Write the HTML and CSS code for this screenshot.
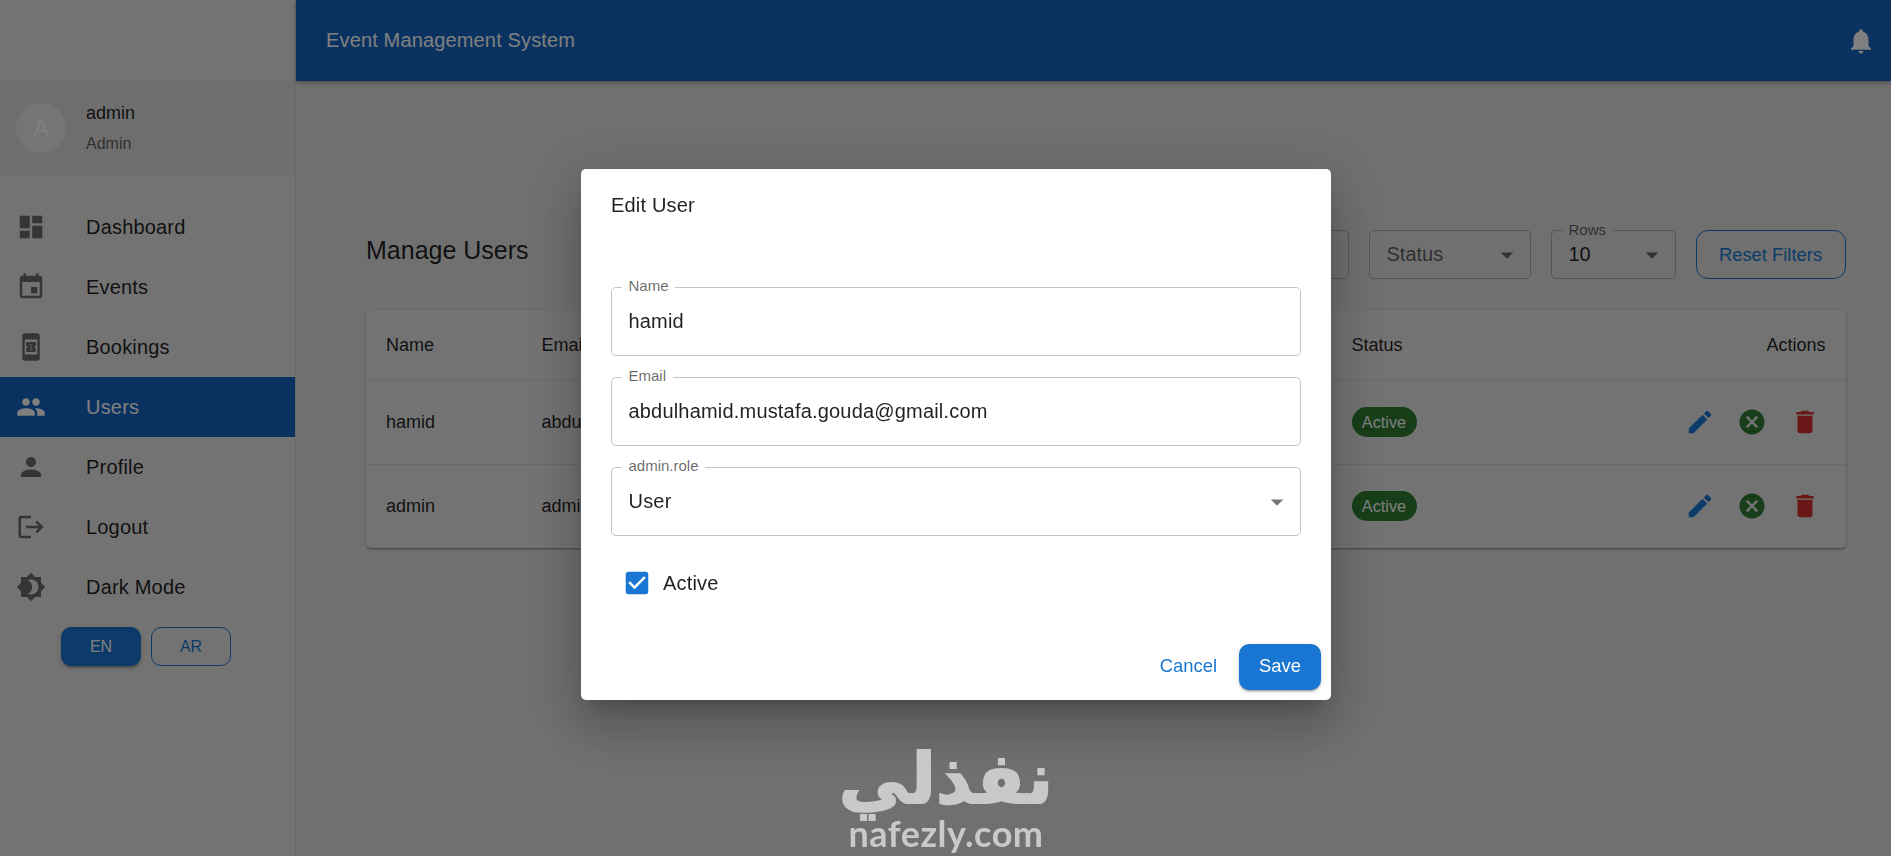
FILE: index.html
```html
<!DOCTYPE html>
<html lang="en">

	<head>
		<meta charset="UTF-8">
		<title>Manage Users</title>
		<link rel="stylesheet" href="styles.css">
	</head>

	<body>
		<div class="layout">
			<!--sidebar-->
			<div class="sidebar">
				<div class="profile">
					<div class="avatar">A</div>
					<div>
						<div class="profile_name">admin</div>
						<div class="profile_role">Admin</div>
					</div>
				</div>
				<ul class="nav">
					<li class="nav_item"><svg class="icon nav_icon" viewBox="0 0 24 24"><path d="M3 13h8V3H3v10zm0 8h8v-6H3v6zm10 0h8V11h-8v10zm0-18v6h8V3h-8z"/></svg>Dashboard</li>
					<li class="nav_item"><svg class="icon nav_icon" viewBox="0 0 24 24"><path d="M17 12h-5v5h5v-5zM16 1v2H8V1H6v2H5c-1.11 0-1.99.9-1.99 2L3 19c0 1.1.89 2 2 2h14c1.1 0 2-.9 2-2V5c0-1.1-.9-2-2-2h-1V1h-2zm3 18H5V8h14v11z"/></svg>Events</li>
					<li class="nav_item"><svg class="icon nav_icon" viewBox="0 0 24 24"><path d="M17 1H7c-1.1 0-2 .9-2 2v18c0 1.1.9 2 2 2h10c1.1 0 2-.9 2-2V3c0-1.1-.9-2-2-2zM7 18V6h10v12H7zm9-7V9.14C16 8.51 15.55 8 15 8H9c-.55 0-1 .51-1 1.14v1.96c.55 0 1 .45 1 1s-.45 1-1 1v1.76C8 15.49 8.45 16 9 16h6c.55 0 1-.51 1-1.14V13c-.55 0-1-.45-1-1s.45-1 1-1zm-3.5 3.5h-1v-1h1v1zm0-2h-1v-1h1v1zm0-2h-1v-1h1v1z"/></svg>Bookings</li>
					<li class="nav_item nav_active"><svg class="icon nav_icon" viewBox="0 0 24 24"><path d="M16 11c1.66 0 2.99-1.34 2.99-3S17.66 5 16 5c-1.66 0-3 1.34-3 3s1.34 3 3 3zm-8 0c1.66 0 2.99-1.34 2.99-3S9.66 5 8 5C6.34 5 5 6.34 5 8s1.34 3 3 3zm0 2c-2.33 0-7 1.17-7 3.5V19h14v-2.5c0-2.33-4.67-3.5-7-3.5zm8 0c-.29 0-.62.02-.97.05 1.16.84 1.97 1.97 1.97 3.45V19h6v-2.5c0-2.33-4.67-3.5-7-3.5z"/></svg>Users</li>
					<li class="nav_item"><svg class="icon nav_icon" viewBox="0 0 24 24"><path d="M12 12c2.21 0 4-1.79 4-4s-1.79-4-4-4-4 1.79-4 4 1.79 4 4 4zm0 2c-2.67 0-8 1.34-8 4v2h16v-2c0-2.66-5.33-4-8-4z"/></svg>Profile</li>
					<li class="nav_item"><svg class="icon nav_icon" viewBox="0 0 24 24"><path d="M17 7l-1.41 1.41L18.17 11H8v2h10.17l-2.58 2.58L17 17l5-5zM4 5h8V3H4c-1.1 0-2 .9-2 2v14c0 1.1.9 2 2 2h8v-2H4V5z"/></svg>Logout</li>
					<li class="nav_item"><svg class="icon nav_icon" viewBox="0 0 24 24"><path d="M20 8.69V4h-4.69L12 .69 8.69 4H4v4.69L.69 12 4 15.31V20h4.69L12 23.31 15.31 20H20v-4.69L23.31 12 20 8.69zM12 18c-.89 0-1.74-.2-2.5-.55C11.56 16.5 13 14.42 13 12s-1.44-4.5-3.5-5.45C10.26 6.2 11.11 6 12 6c3.31 0 6 2.69 6 6s-2.69 6-6 6z"/></svg>Dark Mode</li>
				</ul>
				<div class="lang">
					<button class="lang_button lang_active">EN</button>
					<button class="lang_button">AR</button>
				</div>
			</div>

			<div class="main">
				<div class="appbar">
					<span>Event Management System</span>
					<svg class="icon" viewBox="0 0 24 24"><path d="M12 22c1.1 0 2-.9 2-2h-4c0 1.1.89 2 2 2zm6-6v-5c0-3.07-1.64-5.64-4.5-6.32V4c0-.83-.67-1.5-1.5-1.5s-1.5.67-1.5 1.5v.68C7.63 5.36 6 7.92 6 11v5l-2 2v1h16v-1l-2-2z"/></svg>
				</div>

				<div class="content">
					<div class="toolbar">
						<div class="page_title">Manage Users</div>
						<div class="filters">
							<div class="filter filter_wide"></div>
							<div class="filter filter_status">Status<svg class="icon arrow" viewBox="0 0 24 24"><path d="M7 10l5 5 5-5z"/></svg></div>
							<div class="filter filter_rows"><span class="filter_label">Rows</span><span class="filter_value">10</span><svg class="icon arrow" viewBox="0 0 24 24"><path d="M7 10l5 5 5-5z"/></svg></div>
							<button class="reset_button">Reset Filters</button>
						</div>
					</div>

					<table class="users">
						<colgroup>
							<col class="col_name">
							<col class="col_email">
							<col class="col_status">
							<col class="col_actions">
						</colgroup>
						<tr class="head_row">
							<th>Name</th>
							<th>Email</th>
							<th>Status</th>
							<th class="actions_cell">Actions</th>
						</tr>
						<tr>
							<td>hamid</td>
							<td>abdulh</td>
							<td><span class="chip">Active</span></td>
							<td>
								<div class="actions_box">
									<svg class="icon act_edit" viewBox="0 0 24 24"><path d="M3 17.25V21h3.75L17.81 9.94l-3.75-3.75L3 17.25zM20.71 7.04c.39-.39.39-1.02 0-1.41l-2.34-2.34a.9959.9959 0 0 0-1.41 0l-1.83 1.83 3.75 3.75 1.83-1.83z"/></svg>
									<svg class="icon act_toggle" viewBox="0 0 24 24"><path d="M12 2C6.47 2 2 6.47 2 12s4.47 10 10 10 10-4.47 10-10S17.53 2 12 2zm5 13.59L15.59 17 12 13.41 8.41 17 7 15.59 10.59 12 7 8.41 8.41 7 12 10.59 15.59 7 17 8.41 13.41 12 17 15.59z"/></svg>
									<svg class="icon act_delete" viewBox="0 0 24 24"><path d="M6 19c0 1.1.9 2 2 2h8c1.1 0 2-.9 2-2V7H6v12zM19 4h-3.5l-1-1h-5l-1 1H5v2h14V4z"/></svg>
								</div>
							</td>
						</tr>
						<tr>
							<td>admin</td>
							<td>admin</td>
							<td><span class="chip">Active</span></td>
							<td>
								<div class="actions_box">
									<svg class="icon act_edit" viewBox="0 0 24 24"><path d="M3 17.25V21h3.75L17.81 9.94l-3.75-3.75L3 17.25zM20.71 7.04c.39-.39.39-1.02 0-1.41l-2.34-2.34a.9959.9959 0 0 0-1.41 0l-1.83 1.83 3.75 3.75 1.83-1.83z"/></svg>
									<svg class="icon act_toggle" viewBox="0 0 24 24"><path d="M12 2C6.47 2 2 6.47 2 12s4.47 10 10 10 10-4.47 10-10S17.53 2 12 2zm5 13.59L15.59 17 12 13.41 8.41 17 7 15.59 10.59 12 7 8.41 8.41 7 12 10.59 15.59 7 17 8.41 13.41 12 17 15.59z"/></svg>
									<svg class="icon act_delete" viewBox="0 0 24 24"><path d="M6 19c0 1.1.9 2 2 2h8c1.1 0 2-.9 2-2V7H6v12zM19 4h-3.5l-1-1h-5l-1 1H5v2h14V4z"/></svg>
								</div>
							</td>
						</tr>
					</table>
				</div>
			</div>
		</div>

		<!--edit user dialog-->
		<div class="backdrop">
			<div class="modal">
				<div class="modal_title">Edit User</div>
				<div class="modal_fields">
					<div class="field"><span class="field_label">Name</span>hamid</div>
					<div class="field"><span class="field_label">Email</span>abdulhamid.mustafa.gouda@gmail.com</div>
					<div class="field"><span class="field_label">admin.role</span>User<svg class="icon field_arrow" viewBox="0 0 24 24"><path d="M7 10l5 5 5-5z"/></svg></div>
				</div>
				<div class="check_row">
					<svg class="icon check_icon" viewBox="0 0 24 24"><path d="M19 3H5c-1.11 0-2 .9-2 2v14c0 1.1.89 2 2 2h14c1.11 0 2-.9 2-2V5c0-1.1-.89-2-2-2zm-9 14l-5-5 1.41-1.41L10 14.17l7.59-7.59L19 8l-9 9z"/></svg>
					Active
				</div>
				<div class="modal_actions">
					<button class="cancel_button">Cancel</button>
					<button class="save_button">Save</button>
				</div>
			</div>
		</div>

		<!--watermark-->
		<div class="watermark">
			<div class="watermark_ar" lang="ar" dir="rtl">نفذلي</div>
			<div class="watermark_en">nafezly.com</div>
		</div>
	</body>

</html>
```
FILE: styles.css
```css
* {
	box-sizing: border-box;
}

body {
	margin: 0;
	height: 856px;
	overflow: hidden;
	font-family: "Liberation Sans", Arial, sans-serif;
	font-size: 20px;
	color: rgba(0, 0, 0, 0.87);
	background-color: #e0e0e0;
}

.icon {
	width: 30px;
	height: 30px;
	fill: currentColor;
	flex-shrink: 0;
}

.layout {
	display: flex;
	height: 100%;
}

/*sidebar*/

.sidebar {
	width: 295.5px;
	flex-shrink: 0;
	padding-top: 81px;
	background-color: #e6e6e6;
	border-right: 1px solid #d2d2d2;
}

.profile {
	height: 94px;
	display: flex;
	align-items: center;
	gap: 20px;
	padding-left: 16px;
	background-color: #dcdcdc;
}

.avatar {
	width: 50px;
	height: 50px;
	border-radius: 50%;
	display: flex;
	align-items: center;
	justify-content: center;
	font-size: 25px;
	color: #ffffff;
	background-color: #ebebeb;
}

.profile_name {
	font-size: 18px;
	margin-bottom: 11px;
}

.profile_role {
	font-size: 16px;
	color: rgba(0, 0, 0, 0.6);
}

.nav {
	list-style: none;
	margin: 22px 0 0 0;
	padding: 0;
}

.nav_item {
	height: 60px;
	display: flex;
	align-items: center;
	gap: 40px;
	padding-left: 16px;
	letter-spacing: 0.00938em;
}

.nav_icon {
	color: rgba(0, 0, 0, 0.54);
}

.nav_active {
	color: #ffffff;
	background-color: #1565c0;
}

.nav_active .nav_icon {
	color: #ffffff;
}

.lang {
	display: flex;
	gap: 10px;
	margin-top: 10px;
	padding-left: 61px;
}

.lang_button {
	width: 80px;
	height: 39px;
	font-family: inherit;
	font-size: 16px;
	color: #1976d2;
	background: transparent;
	border: 1px solid #1976d2;
	border-radius: 10px;
}

.lang_active {
	color: #ffffff;
	border: none;
	background-color: #1976d2;
	box-shadow: 0 3px 3px -2px rgba(0, 0, 0, 0.3), 0 2px 4px rgba(0, 0, 0, 0.2);
}

/*main*/

.main {
	flex: 1;
	min-width: 0;
}

.appbar {
	height: 81px;
	display: flex;
	align-items: center;
	justify-content: space-between;
	padding: 0 15px 0 30.5px;
	letter-spacing: 0.0075em;
	color: #ffffff;
	background-color: #1565c0;
	box-shadow: 0 2px 4px rgba(0, 0, 0, 0.3);
}

.content {
	padding: 149px 45.5px 0 70.5px;
}

.toolbar {
	display: flex;
	align-items: center;
	justify-content: space-between;
	margin-bottom: 31px;
}

.page_title {
	font-size: 25px;
	margin-bottom: 9px;
}

.filters {
	display: flex;
	gap: 20px;
}

.filter {
	position: relative;
	height: 49px;
	display: flex;
	align-items: center;
	justify-content: space-between;
	padding: 0 8px 0 17px;
	color: rgba(0, 0, 0, 0.6);
	border: 1px solid rgba(0, 0, 0, 0.23);
	border-radius: 5px;
}

.filter_wide {
	width: 160px;
}

.filter_status {
	width: 162px;
}

.filter_rows {
	width: 125px;
}

.filter_value {
	color: rgba(0, 0, 0, 0.87);
	margin-right: auto;
}

.filter_label {
	position: absolute;
	left: 10px;
	top: -10px;
	padding: 0 7px;
	font-size: 15px;
	line-height: 18px;
	background-color: #e0e0e0;
}

.arrow {
	color: rgba(0, 0, 0, 0.54);
}

.reset_button {
	width: 150px;
	height: 49px;
	font-family: inherit;
	font-size: 18.4px;
	color: #1976d2;
	background: transparent;
	border: 1px solid #1976d2;
	border-radius: 12px;
}

/*table*/

.users {
	width: 100%;
	table-layout: fixed;
	border-collapse: separate;
	border-spacing: 0;
	font-size: 18px;
	background-color: #e6e6e6;
	border-radius: 5px;
	box-shadow: 0 2px 2px -1px rgba(0, 0, 0, 0.25), 0 1px 3px rgba(0, 0, 0, 0.2);
}

.col_name {
	width: 155.5px;
}

.col_email {
	width: 810px;
}

.col_status {
	width: 200px;
}

.users th,
.users td {
	height: 83.5px;
	padding: 0 20px;
	text-align: left;
	font-weight: normal;
	border-bottom: 1px solid #d2d2d2;
	white-space: nowrap;
}

.users tr:last-child td {
	border-bottom: none;
}

.users .head_row th {
	height: 71px;
}

.users .actions_cell {
	text-align: right;
}

.actions_box {
	display: flex;
	justify-content: flex-end;
	gap: 22.5px;
	margin-right: 6px;
}

.chip {
	display: inline-block;
	width: 65px;
	height: 30px;
	line-height: 30px;
	text-align: center;
	font-size: 16.25px;
	color: #ffffff;
	background-color: #2e7d32;
	border-radius: 15px;
}

.act_edit {
	color: #1976d2;
}

.act_toggle {
	color: #2e7d32;
}

.act_delete {
	color: #d32f2f;
}

/*dialog*/

.backdrop {
	position: fixed;
	left: 0;
	top: 0;
	width: 100%;
	height: 100%;
	background-color: rgba(0, 0, 0, 0.5);
}

.modal {
	position: absolute;
	left: 581px;
	top: 169px;
	width: 750px;
	height: 531px;
	display: flex;
	flex-direction: column;
	padding: 24px 30px 10px 30px;
	letter-spacing: 0.00938em;
	background-color: #ffffff;
	border-radius: 5px;
	box-shadow: 0 14px 18px -9px rgba(0, 0, 0, 0.2), 0 30px 48px 4px rgba(0, 0, 0, 0.14), 0 11px 58px 10px rgba(0, 0, 0, 0.12);
}

.modal_title {
	line-height: 24px;
	margin-bottom: 70px;
}

.modal_fields {
	display: flex;
	flex-direction: column;
	gap: 21px;
}

.field {
	position: relative;
	height: 69px;
	display: flex;
	align-items: center;
	justify-content: space-between;
	padding: 0 8px 0 16.5px;
	border: 1px solid #c4c4c4;
	border-radius: 5px;
}

.field_label {
	position: absolute;
	left: 10px;
	top: -11px;
	padding: 0 6.5px;
	font-size: 15px;
	line-height: 18px;
	letter-spacing: 0;
	color: rgba(0, 0, 0, 0.6);
	background-color: #ffffff;
}

.field_arrow {
	color: rgba(0, 0, 0, 0.54);
}

.check_row {
	display: flex;
	align-items: center;
	gap: 11px;
	height: 30px;
	margin-top: 32px;
	padding-left: 11px;
}

.check_icon {
	color: #1976d2;
}

.modal_actions {
	display: flex;
	align-items: center;
	justify-content: flex-end;
	gap: 22px;
	margin-top: auto;
	margin-right: -20px;
}

.cancel_button {
	padding: 0 0 2px 0;
	font-family: inherit;
	font-size: 18.4px;
	color: #1976d2;
	background: transparent;
	border: none;
}

.save_button {
	width: 82px;
	height: 46px;
	padding-bottom: 3px;
	font-family: inherit;
	font-size: 18.4px;
	color: #ffffff;
	background-color: #1976d2;
	border: none;
	border-radius: 10px;
	box-shadow: 0 3px 1px -2px rgba(0, 0, 0, 0.2), 0 2px 2px rgba(0, 0, 0, 0.14), 0 1px 5px rgba(0, 0, 0, 0.12);
}

/*watermark*/

.watermark {
	position: fixed;
	left: 839px;
	top: 745px;
	width: 214px;
	text-align: center;
	color: #c9c9c9;
}

.watermark_ar {
	font-family: "DejaVu Sans", sans-serif;
	font-weight: bold;
	font-size: 70px;
	line-height: 68px;
	-webkit-text-stroke: 2px #c9c9c9;
	white-space: nowrap;
}

.watermark_en {
	font-family: "Lato", sans-serif;
	font-weight: bold;
	font-size: 36px;
	line-height: 40px;
	letter-spacing: 0.5px;
}
```
